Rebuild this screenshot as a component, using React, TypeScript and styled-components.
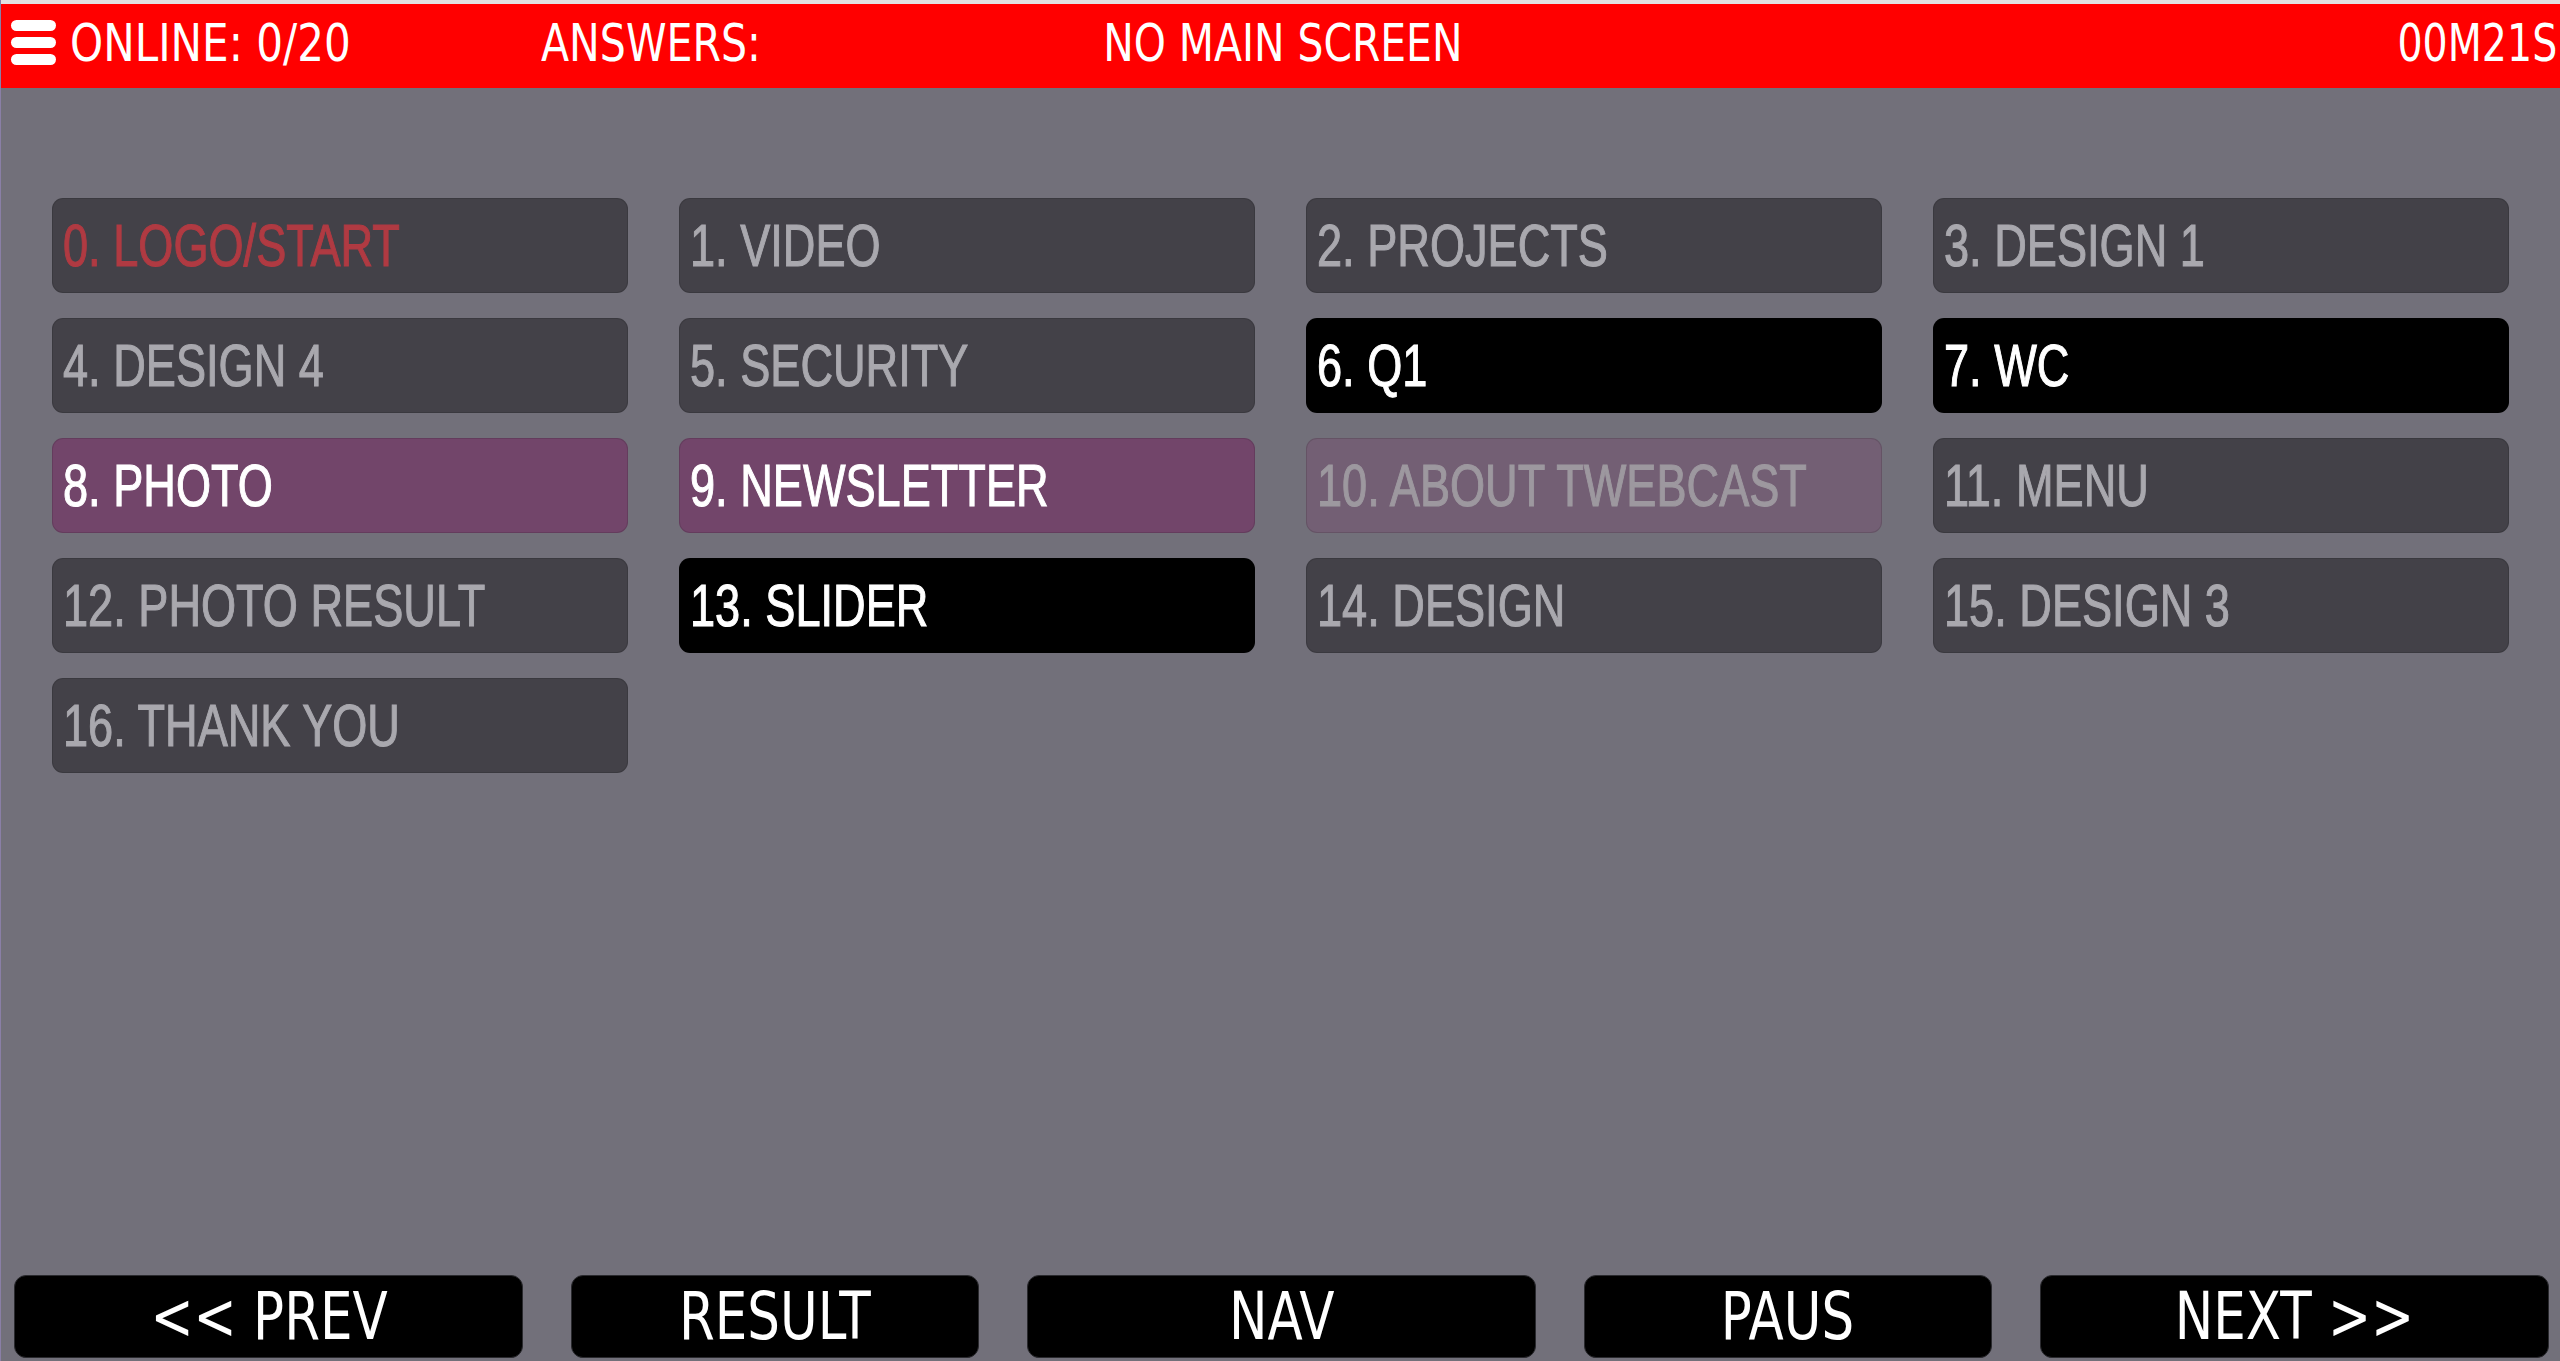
import { FC } from "react";
import styled, { createGlobalStyle } from "styled-components";

type Tone = "idle" | "current" | "voted" | "picked" | "faded";

interface Slide {
  label: string;
  tone: Tone;
}

const slides: Slide[] = [
  { label: "0. LOGO/START", tone: "current" },
  { label: "1. VIDEO", tone: "idle" },
  { label: "2. PROJECTS", tone: "idle" },
  { label: "3. DESIGN 1", tone: "idle" },
  { label: "4. DESIGN 4", tone: "idle" },
  { label: "5. SECURITY", tone: "idle" },
  { label: "6. Q1", tone: "voted" },
  { label: "7. WC", tone: "voted" },
  { label: "8. PHOTO", tone: "picked" },
  { label: "9. NEWSLETTER", tone: "picked" },
  { label: "10. ABOUT TWEBCAST", tone: "faded" },
  { label: "11. MENU", tone: "idle" },
  { label: "12. PHOTO RESULT", tone: "idle" },
  { label: "13. SLIDER", tone: "voted" },
  { label: "14. DESIGN", tone: "idle" },
  { label: "15. DESIGN 3", tone: "idle" },
  { label: "16. THANK YOU", tone: "idle" },
];

const tileColors: Record<Tone, { bg: string; fg: string }> = {
  idle: { bg: "#434148", fg: "#a9a8ae" },
  current: { bg: "#434148", fg: "#b03a42" },
  voted: { bg: "#000000", fg: "#ffffff" },
  picked: { bg: "#72456a", fg: "#ffffff" },
  faded: { bg: "#735f74", fg: "#9d989f" },
};

const GlobalStyle = createGlobalStyle`
  html, body {
    margin: 0;
    padding: 0;
    height: 100%;
    background: #72707a;
    overflow: hidden;
  }
  #root {
    height: 100%;
  }
`;

const Styles = {
  Page: styled.div`
    display: flex;
    flex-direction: column;
    height: 100vh;
    background: #72707a;
    border-left: 1px solid #8a7fa6;
    box-sizing: border-box;
  `,
  Header: styled.header`
    display: grid;
    grid-template-columns: 1fr auto 1fr;
    align-items: center;
    height: 88px;
    padding: 0 3px 6px 8px;
    box-sizing: border-box;
    border-top: 4px solid #e2e2e2;
    background: #ff0000;
    color: #ffffff;
    font-family: "DejaVu Sans", Verdana, sans-serif;
    font-size: 52px;
    line-height: 1;
  `,
  HeaderLeft: styled.div`
    display: flex;
    align-items: center;
  `,
  Burger: styled.svg`
    width: 49px;
    height: 46px;
    margin-right: 12px;
    flex: none;
  `,
  Cell: styled.div<{ $width?: number; $align?: "left" | "center" | "right" }>`
    display: flex;
    justify-content: ${({ $align }) =>
      $align === "right" ? "flex-end" : $align === "center" ? "center" : "flex-start"};
    width: ${({ $width }) => ($width ? `${$width}px` : "auto")};
    flex: none;
  `,
  Squeeze: styled.span<{ $sx: number; $origin?: "left" | "center" | "right" }>`
    display: inline-block;
    white-space: nowrap;
    transform: scaleX(${({ $sx }) => $sx});
    transform-origin: ${({ $origin }) => $origin ?? "left"} center;
  `,
  Grid: styled.main`
    flex: 1;
    display: grid;
    grid-template-columns: repeat(4, 1fr);
    grid-auto-rows: 95px;
    column-gap: 51px;
    row-gap: 25px;
    align-content: start;
    padding: 110px 51px 0 51px;
  `,
  Tile: styled.div<{ $tone: Tone }>`
    display: flex;
    align-items: center;
    padding-left: 10px;
    border-radius: 11px;
    border: 1px solid rgba(0, 0, 0, 0.12);
    background: ${({ $tone }) => tileColors[$tone].bg};
    color: ${({ $tone }) => tileColors[$tone].fg};
    font-family: "Liberation Sans", Arial, sans-serif;
    font-size: 59px;
    -webkit-text-stroke: 1.1px currentColor;
    overflow: hidden;
  `,
  Footer: styled.footer`
    display: flex;
    gap: 48px;
    padding: 0 11px 3px 13px;
  `,
  Button: styled.button<{ $wide?: boolean }>`
    flex: ${({ $wide }) => ($wide ? 5 : 4)} 1 0;
    height: 83px;
    display: flex;
    align-items: center;
    justify-content: center;
    background: #000000;
    color: #ffffff;
    border: 1px solid #2a2a2e;
    border-radius: 12px;
    font-family: "DejaVu Sans", Verdana, sans-serif;
    font-size: 66px;
    line-height: 1;
    padding: 0;
    cursor: pointer;
  `,
};

const Burger: FC = () => (
  <Styles.Burger viewBox="0 0 49 46">
    <rect x="2" y="0" width="45" height="11" rx="5.5" fill="#ffffff" />
    <rect x="2" y="17" width="45" height="11" rx="5.5" fill="#ffffff" />
    <rect x="2" y="34" width="45" height="11" rx="5.5" fill="#ffffff" />
  </Styles.Burger>
);

const footerButtons = [
  { label: "<< PREV", wide: true },
  { label: "RESULT", wide: false },
  { label: "NAV", wide: true },
  { label: "PAUS", wide: false },
  { label: "NEXT >>", wide: true },
];

const App: FC = () => {
  return (
    <>
      <GlobalStyle />
      <Styles.Page>
        <Styles.Header>
          <Styles.HeaderLeft>
            <Burger />
            <Styles.Cell $width={471}>
              <Styles.Squeeze $sx={0.81}>ONLINE: 0/20</Styles.Squeeze>
            </Styles.Cell>
            <Styles.Cell>
              <Styles.Squeeze $sx={0.79}>ANSWERS:</Styles.Squeeze>
            </Styles.Cell>
          </Styles.HeaderLeft>
          <Styles.Cell $align="center">
            <Styles.Squeeze $sx={0.785} $origin="center">
              NO MAIN SCREEN
            </Styles.Squeeze>
          </Styles.Cell>
          <Styles.Cell $align="right">
            <Styles.Squeeze $sx={0.76} $origin="right">
              00M21S
            </Styles.Squeeze>
          </Styles.Cell>
        </Styles.Header>

        <Styles.Grid>
          {slides.map((s) => (
            <Styles.Tile key={s.label} $tone={s.tone}>
              <Styles.Squeeze $sx={0.765}>{s.label}</Styles.Squeeze>
            </Styles.Tile>
          ))}
        </Styles.Grid>

        <Styles.Footer>
          {footerButtons.map((b) => (
            <Styles.Button key={b.label} $wide={b.wide}>
              <Styles.Squeeze $sx={0.78} $origin="center">
                {b.label}
              </Styles.Squeeze>
            </Styles.Button>
          ))}
        </Styles.Footer>
      </Styles.Page>
    </>
  );
};

export default App;
